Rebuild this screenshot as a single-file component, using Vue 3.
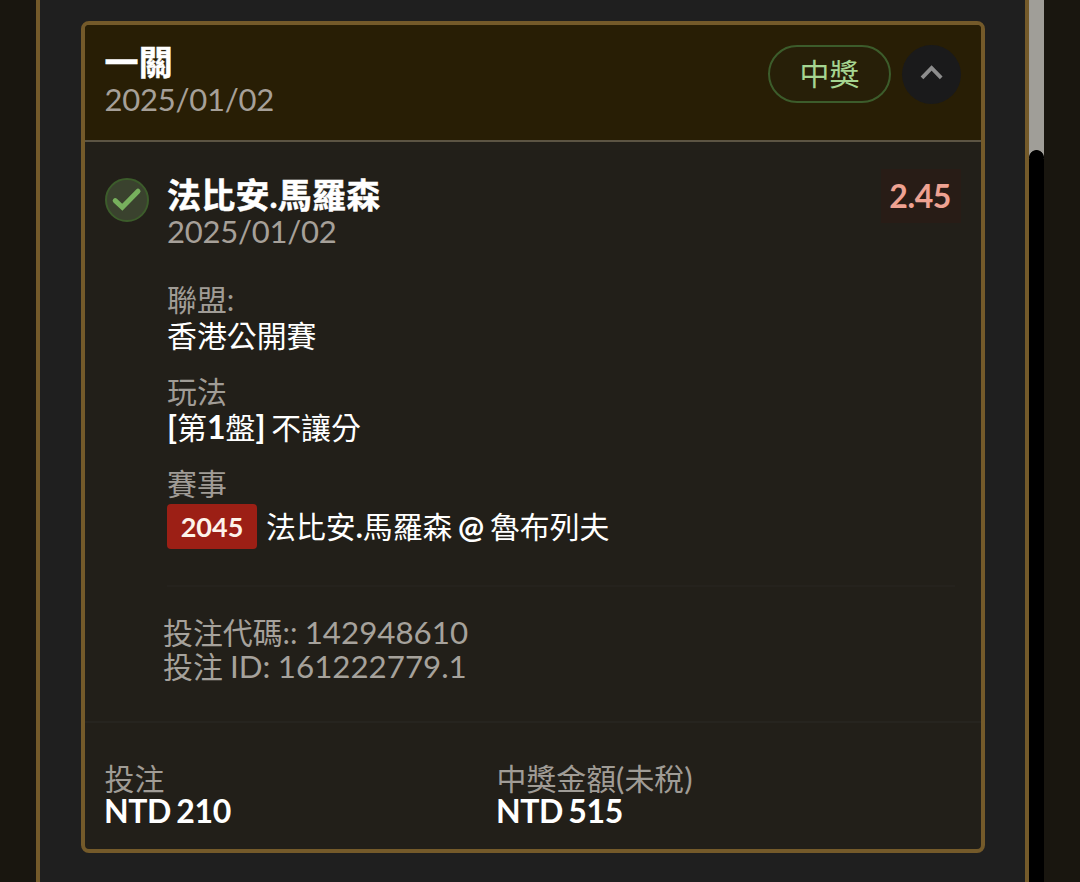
<script setup>
const fields = [
  { label: '聯盟:', parts: [{ t: '香港公開賽' }] },
  { label: '玩法', parts: [{ t: '[', b: true, big: true }, { t: '第' }, { t: '1', b: true, big: true }, { t: '盤' }, { t: '] ', b: true, big: true }, { t: '不讓分' }] },
]
</script>

<template>
  <div class="page">
    <main class="panel">
      <article class="card">
        <header class="head">
          <div class="head-text">
            <h1 class="title">一關</h1>
            <p class="date">2025/01/02</p>
          </div>
          <span class="status">中獎</span>
          <button class="toggle" aria-label="toggle">
            <svg width="59" height="59" viewBox="0 0 59 59">
              <path d="M20 32.8 L29.6 23 L39.2 32.8" fill="none" stroke="#8d8d8d" stroke-width="3.8" />
            </svg>
          </button>
        </header>

        <section class="bet">
          <svg class="check" width="44" height="44" viewBox="0 0 44 44">
            <circle cx="22" cy="22" r="21" fill="#3a422e" stroke="#3c5c2b" stroke-width="2" />
            <path d="M10.2 22.7 L17.3 29.3 L33 13.2" fill="none" stroke="#77b15d" stroke-width="5" stroke-linecap="round" stroke-linejoin="miter" />
          </svg>
          <div class="detail">
            <div class="bet-top">
              <div>
                <h2 class="title">法比安.馬羅森</h2>
                <p class="date">2025/01/02</p>
              </div>
              <span class="odds">2.45</span>
            </div>
            <div v-for="f in fields" :key="f.label" class="field">
              <p class="label">{{ f.label }}</p>
              <p class="value"><span v-for="(p, i) in f.parts" :key="i" :class="{ strong: p.b, big: p.big }">{{ p.t }}</span></p>
            </div>
            <div class="field last">
              <p class="label">賽事</p>
              <div class="match">
                <span class="badge">2045</span>
                <span class="value">法比安<span class="strong">.</span>馬羅森 <span class="strong at">@</span> 魯布列夫</span>
              </div>
            </div>
            <div class="codes">
              <p>投注代碼:: <span class="num">142948610</span></p>
              <p>投注 <span class="num">ID: 161222779.1</span></p>
            </div>
          </div>
        </section>

        <footer class="foot">
          <div>
            <p class="label">投注</p>
            <p class="amount">NTD 210</p>
          </div>
          <div>
            <p class="label">中獎金額<span class="num">(</span>未稅<span class="num">)</span></p>
            <p class="amount">NTD 515</p>
          </div>
        </footer>
      </article>
    </main>
    <div class="scroll"><div class="thumb"></div></div>
  </div>
</template>

<style>
body {
  margin: 0;
  background: #19160f;
}
</style>

<style scoped>
.page {
  box-sizing: border-box;
  display: flex;
  width: 1080px;
  height: 882px;
  padding-left: 36px;
  overflow: hidden;
  background: #19160f;
  font-family: Lato, "Noto Sans CJK TC", sans-serif;
  font-size: 29.9px;
  color: #fff;
}
h1, h2, p { margin: 0; }
.panel {
  box-sizing: border-box;
  width: 993px;
  height: 882px;
  padding: 21px 40px 0 41px;
  border: solid #745a2a;
  border-width: 0 4px;
  background: #1f1f1f;
}
.card {
  box-sizing: border-box;
  height: 832px;
  border: 4px solid #745a2a;
  border-radius: 8px;
  background: #221f19;
  overflow: hidden;
}
.head {
  box-sizing: border-box;
  display: flex;
  align-items: flex-start;
  height: 117px;
  padding: 20px 20px 0 19.5px;
  border-bottom: 2px solid #5c5443;
  background: #281e05;
}
.head-text { flex: 1; margin-top: -3px; }
.title {
  font-size: 34px;
  letter-spacing: 0.2px;
  line-height: 40px;
  font-weight: 700;
  white-space: nowrap;
  -webkit-text-stroke: 0.5px #fff;
}
.date {
  font-size: 31px;
  letter-spacing: -0.25px;
  line-height: 36px;
  color: #a6a099;
}
.head .date { margin-top: -1px; }
.status {
  box-sizing: border-box;
  width: 123px;
  height: 58px;
  margin-right: 12px;
  border: 2px solid #3c5c2b;
  border-radius: 29px;
  background: #271f08;
  color: #a5d591;
  line-height: 53px;
  text-align: center;
}
.toggle {
  width: 59px;
  height: 59px;
  margin-left: -1px;
  padding: 0;
  border: 0;
  border-radius: 50%;
  background: #1a1a1b;
}
.toggle svg { display: block; }
.bet {
  box-sizing: border-box;
  display: flex;
  height: 579px;
  padding: 34px 20px 0;
}
.check { flex: none; margin: 2px 18px 0 0; }
.detail { flex: 1; }
.bet-top {
  display: flex;
  justify-content: space-between;
  height: 105px;
}
.bet-top .title { line-height: 38px; }
.bet-top .date { margin-top: -1px; }
.odds {
  box-sizing: border-box;
  height: 54px;
  padding: 0 10px 0 8px;
  margin-top: -7px;
  background: #281c16;
  color: #eea292;
  font-size: 32px;
  letter-spacing: -0.4px;
  line-height: 53px;
  font-weight: 700;
}
.field { height: 92px; }
.field.last { height: 130px; }
.label {
  line-height: 36px;
  color: #a09c96;
}
.value {
  line-height: 36px;
  white-space: nowrap;
  word-spacing: -2px;
}
.strong { font-weight: 700; }
.big { font-size: 32px; line-height: 30px; }
.at { font-size: 31px; line-height: 30px; }
.match {
  display: flex;
  align-items: center;
  gap: 9px;
  height: 45px;
  margin-top: 3px;
}
.match .value { margin-top: -2px; }
.badge {
  width: 90px;
  height: 45px;
  border-radius: 4px;
  background: #9c1f15;
  color: #fdf3ea;
  text-align: center;
  font-size: 27px;
  line-height: 45px;
  font-weight: 700;
}
.codes {
  height: 100px;
  margin: -10px 6px 0 0;
  padding-top: 28px;
  border-top: 2px solid #25221d;
  color: #a6a29c;
  word-spacing: -0.5px;
}
.codes p { margin-left: -4px; line-height: 34px; }
.num { font-size: 31.3px; line-height: 30px; }
.foot {
  display: grid;
  grid-template-columns: 392px 1fr;
  padding: 38px 20px 0 19.5px;
  border-top: 2px solid #26241f;
}
.foot .label { line-height: 34px; }
.amount {
  margin-left: -0.5px;
  font-size: 32px;
  letter-spacing: -0.4px;
  word-spacing: -2px;
  line-height: 32px;
  font-weight: 700;
}
.scroll { width: 15px; background: #000; }
.thumb {
  height: 159px;
  background: radial-gradient(circle 7.5px at 7.5px 157.5px, #000 7px, #a09e98 7.8px);
}
</style>
